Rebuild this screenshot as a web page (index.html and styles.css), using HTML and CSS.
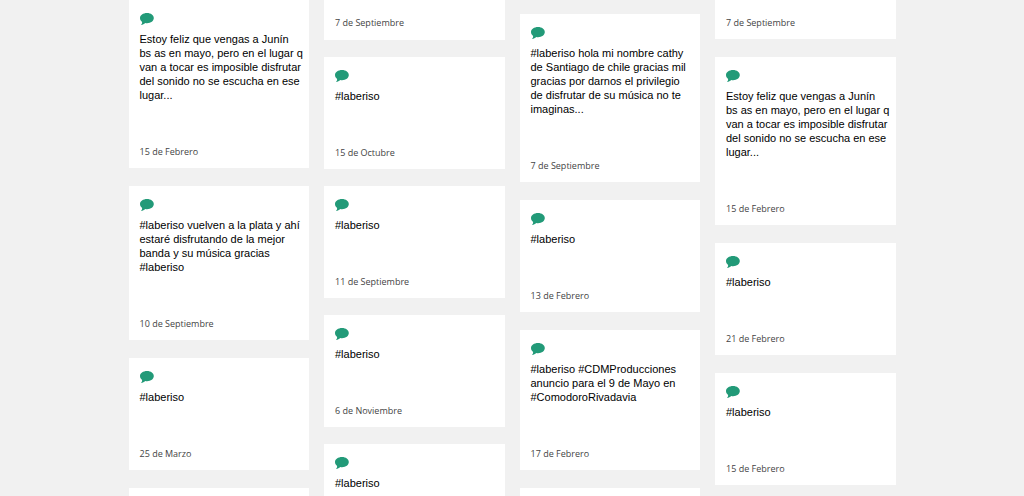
FILE: index.html
```
<!DOCTYPE html>
<html lang="es">
<head>
<meta charset="utf-8">
<meta name="viewport" content="width=device-width, initial-scale=1">
<title>#laberiso</title>
<link rel="stylesheet" href="styles.css">
</head>
<body>
<svg class="sprite" aria-hidden="true">
  <symbol id="bubble" viewBox="0 0 14 12">
    <path d="M7 0C10.900 0 13.800 2.200 13.800 5.100S10.900 10.200 7 10.200C6.400 10.200 5.800 10.100 5.200 10C4.200 11.100 2.800 11.800 1 12C1.700 11.200 2.200 10.200 2.100 9C.8 8 0 6.700 0 5.100C0 2.200 3.100 0 7 0Z"/>
  </symbol>
</svg>
<main class="board">
  <section class="column">
    <article class="card">
      <svg class="icon" aria-hidden="true"><use href="#bubble"/></svg>
      <p class="message">Estoy feliz que vengas a Junín bs as en mayo, pero en el lugar q van a tocar es imposible disfrutar del sonido no se escucha en ese lugar...</p>
      <time class="date">15 de Febrero</time>
    </article>
    <article class="card">
      <svg class="icon" aria-hidden="true"><use href="#bubble"/></svg>
      <p class="message">#laberiso vuelven a la plata y ahí estaré disfrutando de la mejor banda y su música gracias #laberiso</p>
      <time class="date">10 de Septiembre</time>
    </article>
    <article class="card">
      <svg class="icon" aria-hidden="true"><use href="#bubble"/></svg>
      <p class="message">#laberiso</p>
      <time class="date">25 de Marzo</time>
    </article>
    <article class="card"></article>
  </section>
  <section class="column column-tight">
    <article class="card card-tail">
      <time class="date">7 de Septiembre</time>
    </article>
    <article class="card">
      <svg class="icon" aria-hidden="true"><use href="#bubble"/></svg>
      <p class="message">#laberiso</p>
      <time class="date">15 de Octubre</time>
    </article>
    <article class="card">
      <svg class="icon" aria-hidden="true"><use href="#bubble"/></svg>
      <p class="message">#laberiso</p>
      <time class="date">11 de Septiembre</time>
    </article>
    <article class="card">
      <svg class="icon" aria-hidden="true"><use href="#bubble"/></svg>
      <p class="message">#laberiso</p>
      <time class="date">6 de Noviembre</time>
    </article>
    <article class="card">
      <svg class="icon" aria-hidden="true"><use href="#bubble"/></svg>
      <p class="message">#laberiso</p>
    </article>
  </section>
  <section class="column column-lowered">
    <article class="card">
      <svg class="icon" aria-hidden="true"><use href="#bubble"/></svg>
      <p class="message">#laberiso hola mi nombre cathy de Santiago de chile gracias mil gracias por darnos el privilegio de disfrutar de su música no te imaginas...</p>
      <time class="date">7 de Septiembre</time>
    </article>
    <article class="card">
      <svg class="icon" aria-hidden="true"><use href="#bubble"/></svg>
      <p class="message">#laberiso</p>
      <time class="date">13 de Febrero</time>
    </article>
    <article class="card">
      <svg class="icon" aria-hidden="true"><use href="#bubble"/></svg>
      <p class="message">#laberiso #CDMProducciones anuncio para el 9 de Mayo en #ComodoroRivadavia</p>
      <time class="date">17 de Febrero</time>
    </article>
    <article class="card"></article>
  </section>
  <section class="column">
    <article class="card card-tail">
      <time class="date">7 de Septiembre</time>
    </article>
    <article class="card">
      <svg class="icon" aria-hidden="true"><use href="#bubble"/></svg>
      <p class="message">Estoy feliz que vengas a Junín bs as en mayo, pero en el lugar q van a tocar es imposible disfrutar del sonido no se escucha en ese lugar...</p>
      <time class="date">15 de Febrero</time>
    </article>
    <article class="card">
      <svg class="icon" aria-hidden="true"><use href="#bubble"/></svg>
      <p class="message">#laberiso</p>
      <time class="date">21 de Febrero</time>
    </article>
    <article class="card">
      <svg class="icon" aria-hidden="true"><use href="#bubble"/></svg>
      <p class="message">#laberiso</p>
      <time class="date">15 de Febrero</time>
    </article>
  </section>
</main>
</body>
</html>
```
FILE: styles.css
```
* {
  box-sizing: border-box;
}

body {
  margin: 0;
  background: #f1f1f1;
  color: #000;
  font-family: "Liberation Sans", Arial, sans-serif;
}

.sprite {
  display: none;
}

.board {
  display: grid;
  grid-template-columns: repeat(4, minmax(0, 1fr));
  gap: 15px;
  max-width: 767px;
  height: 100vh;
  margin: 0 auto;
  overflow: hidden;
}

.column {
  display: flex;
  flex-direction: column;
  gap: 18px;
  min-height: 0;
}

.column-tight {
  gap: 17px;
}

.column-lowered {
  padding-top: 14px;
}

.card {
  flex-shrink: 0;
  padding: 13px 6px 9px 11px;
  background: #fff;
}

.card-tail {
  padding-top: 16px;
}

.column-tight .card-tail {
  padding-bottom: 10px;
}

.card-tail .date {
  margin-top: 0;
}

.icon {
  display: block;
  width: 14px;
  height: 12px;
  fill: #229a78;
}

.message {
  margin: 7px 0 0;
  font-size: 11px;
  line-height: 14px;
}

.date {
  display: block;
  margin-top: 43px;
  color: #444;
  font-family: "Open Sans", "Noto Sans", sans-serif;
  font-size: 9px;
  font-weight: 400;
  line-height: 14px;
}
```
